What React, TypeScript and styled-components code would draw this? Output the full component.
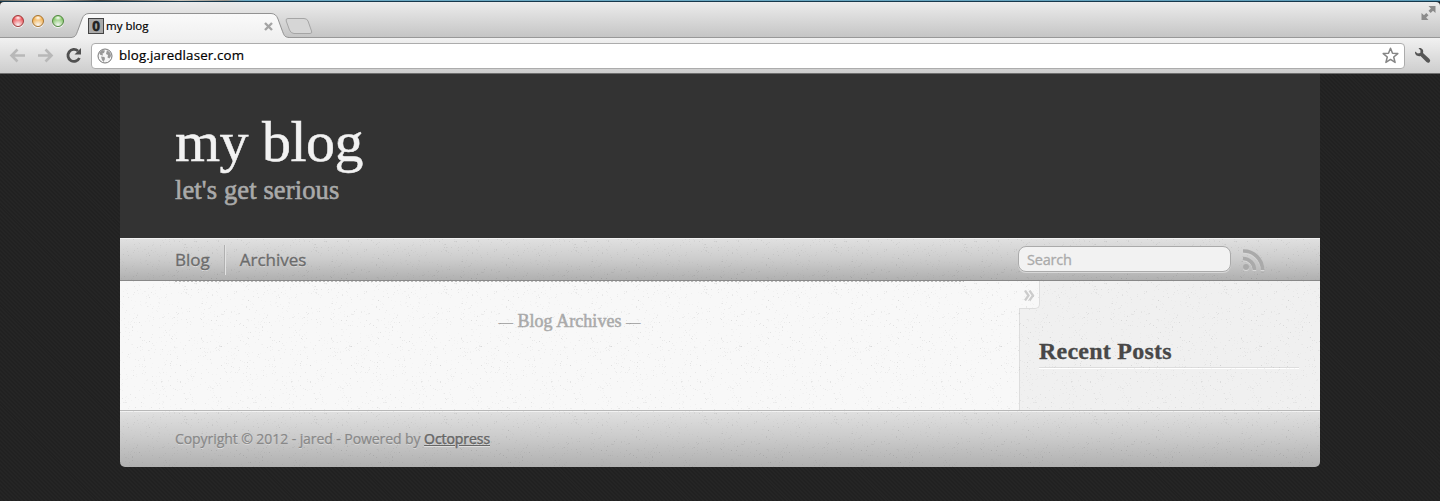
import React from "react";
import styled, { createGlobalStyle } from "styled-components";

const serif = `"Liberation Serif", "Times New Roman", serif`;
const sans = `"Open Sans", "Noto Sans", sans-serif`;

const Global = createGlobalStyle`
  *, *::before, *::after { box-sizing: border-box; }
  body { margin: 0; background: #232323; overflow: hidden; }
  h1, h2, h3, p { margin: 0; }
`;

const Screen = styled.div`
  height: 501px;
  display: flex;
  flex-direction: column;
  background: repeating-linear-gradient(45deg, #212121 0 1.4px, #252525 1.4px 2.8px);
`;

/* Browser window */
const Desktop = styled.div`
  height: 2px;
  flex: none;
  background: linear-gradient(90deg, #6b6a62 0, #b9b5aa 50px, #4c4c48 100px, #c7c3b9 180px, #99958c 225px, #6ba9c3 245px, #6ba9c3 700px, #5d9cb8 100%);
  border-bottom: 1px solid #17384c;
`;
const TabStrip = styled.div`
  height: 36px;
  flex: none;
  display: flex;
  align-items: flex-end;
  background: linear-gradient(#ececec, #c5c5c5);
  border-bottom: 1px solid #989898;
  border-radius: 4px 4px 0 0;
`;
const Lights = styled.div`
  display: flex;
  gap: 8px;
  padding: 0 0 10px 12px;
  width: 72px;
`;
const Light = styled.i<{ $c: string; $edge: string }>`
  width: 12px;
  height: 12px;
  border-radius: 50%;
  border: 1px solid ${(p) => p.$edge};
  background: radial-gradient(ellipse 4px 2.5px at 50% 18%, #fff, transparent), radial-gradient(circle at 50% 90%, #ffffffd0, ${(p) => p.$c} 75%);
  box-shadow: 0 1px 0 #f5f5f5;
`;
const Tab = styled.div`
  position: relative;
  width: 214px;
  height: 25px;
  margin-bottom: -1px;
  display: flex;
  align-items: center;
  padding: 1px 13px 0 16px;
  font: 11.5px ${sans};
  color: #000;
`;
const TabShape = styled.svg`
  position: absolute;
  left: 0;
  top: 0;
`;
const Favicon = styled.span`
  position: relative;
  width: 16px;
  height: 16px;
  margin-right: 2px;
  border: 1px solid #444;
  background: #aaa;
  color: #222;
  font: bold 13.5px/14px "Open Sans", sans-serif;
  text-align: center;
  -webkit-text-stroke: 0.5px #222;
`;
const TabName = styled.span`
  position: relative;
  flex: 1;
  padding-bottom: 2px;
  -webkit-text-stroke: 0.2px #000;
`;
const CloseIcon = styled.svg`
  position: relative;
`;
const NewTab = styled.svg`
  margin: 0 0 2px -2px;
`;
const Spacer = styled.div`
  flex: 1;
`;
const FullIcon = styled.svg`
  margin: 0 4px 17px 0;
`;
const Toolbar = styled.div`
  height: 36px;
  flex: none;
  display: flex;
  align-items: center;
  padding: 0 9px;
  background: linear-gradient(#f1f1f1, #cdcdcd);
  border-bottom: 1px solid #6e6e6e;
`;
const NavIcons = styled.svg`
  flex: none;
`;
const Address = styled.div`
  flex: 1;
  height: 26px;
  display: flex;
  align-items: center;
  padding: 0 5px;
  background: #fff;
  border: 1px solid #acacac;
  border-radius: 4px;
  font: 13.3px ${sans};
  color: #000;
`;
const Url = styled.span`
  flex: 1;
  margin-left: 6px;
  padding-bottom: 2px;
  letter-spacing: 0.16px;
  -webkit-text-stroke: 0.2px #000;
`;
const Wrench = styled.svg`
  margin-left: 9px;
`;

/* Blog page */
const Page = styled.main`
  width: 1200px;
  margin: 0 auto;
  border-radius: 0 0 5px 5px;
  overflow: hidden;
`;
const Header = styled.header`
  height: 164px;
  padding: 37px 55px 0;
  background: #333;
  font-family: ${serif};
`;
const Title = styled.h1`
  font-size: 58px;
  line-height: 62px;
  font-weight: 400;
  letter-spacing: -0.55px;
  color: #f2f2f2;
  -webkit-text-stroke: 0.5px #f2f2f2;
`;
const Subtitle = styled.h2`
  margin-top: 2px;
  font-size: 26.5px;
  line-height: 30px;
  font-weight: 400;
  letter-spacing: 0.12px;
  color: #aaa;
  -webkit-text-stroke: 0.6px #aaa;
`;
const Textured = styled.div`
  position: relative;
`;
const Grain = styled.svg`
  position: absolute;
  inset: 0;
  width: 100%;
  height: 100%;
  pointer-events: none;
`;
const Nav = styled(Textured).attrs({ as: "nav" })`
  height: 43px;
  display: flex;
  align-items: center;
  padding: 0 54px 0 55px;
  background: linear-gradient(#e0e0e0, #ccc 50%, #b0b0b0);
  border-top: 1px solid #f2f2f2;
  border-bottom: 1px solid #888;
`;
const NavLink = styled.a<{ $divided?: boolean }>`
  position: relative;
  height: 30px;
  margin-right: ${(p) => (p.$divided ? 15 : 0)}px;
  padding-right: ${(p) => (p.$divided ? 14 : 0)}px;
  border-right: ${(p) => (p.$divided ? "1px solid #b0b0b0" : "0")};
  box-shadow: ${(p) => (p.$divided ? "1px 0 0 #e3e3e3" : "none")};
  font: 17px/29px ${sans};
  color: #6b6b6b;
  text-shadow: 0 1px #dfdfdf;
  -webkit-text-stroke: 0.35px #6b6b6b;
`;
const Search = styled.div`
  position: relative;
  width: 213px;
  height: 26px;
  margin-bottom: 1px;
  padding-left: 8px;
  border: 1px solid #aaa;
  border-radius: 8px;
  background: #f2f2f2;
  box-shadow: 0 1px #d8d8d8;
  font: 14.5px/25px ${sans};
  letter-spacing: -0.2px;
  color: #aaa;
  -webkit-text-stroke: 0.3px #aaa;
`;
const Rss = styled.svg`
  position: relative;
  margin-left: 11px;
`;
const Content = styled(Textured)`
  height: 129px;
  display: flex;
  background: #f8f8f8;
`;
const Main = styled.section`
  position: relative;
  width: 899px;
  padding: 29px 0 0 55px;
`;
const DottedRule = styled.svg`
  position: absolute;
  left: 55px;
  top: 0;
`;
const Archives = styled.h3`
  width: 789px;
  text-align: center;
  font: 18px/22px ${serif};
  letter-spacing: 0.05px;
  color: #aaa;
  -webkit-text-stroke: 0.5px #aaa;
`;
const Dash = styled.span`
  font-size: 14px;
`;
const Sidebar = styled.aside`
  position: relative;
  flex: 1;
  padding: 56px 21px 0 19px;
  background: #f0f0f0;
  border-left: 1px solid #ddd;
`;
const Toggle = styled.span`
  position: absolute;
  left: -1px;
  top: 0;
  width: 21px;
  height: 28px;
  display: flex;
  align-items: center;
  justify-content: center;
  padding-top: 2px;
  background: #f8f8f8;
  border: solid #ddd;
  border-width: 0 1px 1px 0;
  border-bottom-right-radius: 5px;
`;
const SideTitle = styled.h2`
  height: 31px;
  font: bold 24px/29px ${serif};
  letter-spacing: 0.24px;
  color: #484848;
  -webkit-text-stroke: 0.3px #484848;
  border-bottom: 1px solid #ddd;
  box-shadow: 0 1px #fff;
`;
const Footer = styled(Textured).attrs({ as: "footer" })`
  height: 57px;
  padding: 18px 55px 0;
  background: linear-gradient(#e0e0e0, #ccc 45%, #b0b0b0);
  border-top: 1px solid #b8b8b8;
  box-shadow: inset 0 1px #f2f2f2;
`;
const Copyright = styled.p`
  position: relative;
  font: 14px/20px ${sans};
  letter-spacing: -0.07px;
  color: #888;
  text-shadow: 0 1px #ddd;
  -webkit-text-stroke: 0.25px;
`;
const Link = styled.a`
  color: #666;
  text-decoration: underline;
`;

/* Paper texture: a repeating tile of scattered specks */
const specks = (() => {
  let s = 41;
  const rnd = () => (s = (s * 16807) % 2147483647) / 2147483647;
  return Array.from({ length: 900 }, () => ({
    x: Math.floor(rnd() * 130),
    y: Math.floor(rnd() * 130),
    o: 0.015 + rnd() * rnd() * 0.09,
  }));
})();

const Paper = ({ id }: { id: string }) => (
  <Grain>
    <pattern id={id} width="130" height="130" patternUnits="userSpaceOnUse">
      {specks.map((p, i) => (
        <rect key={i} x={p.x} y={p.y} width="1" height="1" fill="#000" opacity={p.o} />
      ))}
    </pattern>
    <rect width="100%" height="100%" fill={`url(#${id})`} />
  </Grain>
);

const rssArcs = (
  <>
    <circle cx="4" cy="19" r="3" stroke="none" />
    <path d="M1 10.500A11.500 11.500 0 0 1 12.500 22" fill="none" strokeWidth="3.600" />
    <path d="M1 3A19 19 0 0 1 20.500 22" fill="none" strokeWidth="3.600" />
  </>
);

export default function App() {
  return (
    <Screen>
      <Global />
      <Desktop />
      <TabStrip>
        <Lights>
          <Light $c="#ee4b50" $edge="#a03a3a" />
          <Light $c="#f3ad45" $edge="#a87430" />
          <Light $c="#7cc35f" $edge="#50873f" />
        </Lights>
        <Tab>
          <TabShape width="220" height="26" viewBox="0 0 220 26">
            <defs>
              <linearGradient id="tab" x2="0" y2="1">
                <stop stopColor="#fafafa" />
                <stop offset="1" stopColor="#f0f0f0" />
              </linearGradient>
            </defs>
            <path d="M-1 24.5C4 24 4 22 6 17L10 6Q12 .5 17 .5H199Q204 .5 206 6L210 17C212 22 212 24 217 24.5V26H-1Z" fill="url(#tab)" />
            <path d="M-1 24.5C4 24 4 22 6 17L10 6Q12 .5 17 .5H199Q204 .5 206 6L210 17C212 22 212 24 217 24.5" fill="none" stroke="#929292" />
          </TabShape>
          <Favicon>0</Favicon>
          <TabName>my blog</TabName>
          <CloseIcon width="9" height="9" viewBox="0 0 9 9">
            <path d="M1 1L8 8M8 1L1 8" stroke="#a4a4a4" strokeWidth="2.400" />
          </CloseIcon>
        </Tab>
        <NewTab width="30" height="18" viewBox="0 0 30 18">
          <path d="M4 1.5H20Q23 1.5 24 4L27.5 14Q28.5 16.5 26 16.5H10Q7 16.5 5.5 13L2.2 4Q1.5 1.5 4 1.5Z" fill="#d6d6d6" stroke="#a5a5a5" />
        </NewTab>
        <Spacer />
        <FullIcon width="15" height="14" viewBox="0 0 15 14">
          <path d="M7.5 0H14.5V7L12 4.7L9.7 7L7.5 4.8L9.9 2.4ZM.5 14V7L3 9.3L5.3 7L7.5 9.2L5.1 11.6L7.5 14Z" fill="#8b8b8b" />
        </FullIcon>
      </TabStrip>
      <Toolbar>
        <NavIcons width="82" height="20" viewBox="0 0 82 20" fill="none">
          <path d="M16 9.500H3M8.500 3.500L2.500 9.500L8.500 15.500M29 9.500H42M36.500 3.500L42.500 9.500L36.500 15.500" stroke="#b8b8b8" strokeWidth="2.600" />
          <path d="M70.400 12A6 6 0 1 1 69 5" stroke="#505050" strokeWidth="2.800" />
          <path d="M72 2V8.500H65.500Z" fill="#505050" />
        </NavIcons>
        <Address>
          <svg width="16" height="16" viewBox="0 0 16 16">
            <circle cx="8" cy="8" r="7" fill="#f6f6f6" stroke="#777" />
            <path d="M2 5L5 2L8 2.500L7 5L5.500 5.500L6 7.500L3.500 7ZM4 8.500L7.500 9L8 11L6.500 14L5 12ZM10 2L13.500 5L14 8L12.500 10.500L10.500 9.500L11 7L9 6L9.500 4Z" fill="#999" />
          </svg>
          <Url>blog.jaredlaser.com</Url>
          <svg width="17" height="17" viewBox="0 0 17 17">
            <path d="M8.500 1.200L10.500 6.200L15.800 6.600L11.700 10L13.100 15.400L8.500 12.400L3.900 15.400L5.300 10L1.200 6.600L6.500 6.200Z" fill="#fff" stroke="#858585" strokeWidth="1.500" strokeLinejoin="round" />
          </svg>
        </Address>
        <Wrench width="17" height="17" viewBox="0 0 17 17">
          <path d="M4.500 1C8 .3 10 3 9 6L15.500 12Q17 14 15.500 15.300Q14 16.500 12.500 15L6.500 9C3.500 9.800 .7 8 1 4.500L3.800 6.500L6.300 6L6.500 3.500Z" fill="#555" />
        </Wrench>
      </Toolbar>
      <Page>
        <Header>
          <Title>my blog</Title>
          <Subtitle>let's get serious</Subtitle>
        </Header>
        <Nav>
          <Paper id="nav-paper" />
          <NavLink $divided>Blog</NavLink>
          <NavLink>Archives</NavLink>
          <Spacer />
          <Search>Search</Search>
          <Rss width="24" height="24" viewBox="0 0 24 24">
            <g fill="#d8d8d8" stroke="#d8d8d8" transform="translate(0 1)">{rssArcs}</g>
            <g fill="#aaa" stroke="#aaa">{rssArcs}</g>
          </Rss>
        </Nav>
        <Content>
          <Main>
            <DottedRule width="789" height="1">
              <path d="M0 .5H789" stroke="#bbb" strokeDasharray="2 2" />
            </DottedRule>
            <Archives>
              <Dash>—</Dash> Blog Archives <Dash>—</Dash>
            </Archives>
          </Main>
          <Sidebar>
            <Toggle>
              <svg width="11" height="11" viewBox="0 0 11 11">
                <path d="M1 .5L4.500 5.500L1 10.500M5.500 .5L9 5.500L5.500 10.500" fill="none" stroke="#ccc" strokeWidth="2.300" />
              </svg>
            </Toggle>
            <SideTitle>Recent Posts</SideTitle>
          </Sidebar>
          <Paper id="content-paper" />
        </Content>
        <Footer>
          <Paper id="footer-paper" />
          <Copyright>
            Copyright © 2012 - jared - Powered by <Link>Octopress</Link>
          </Copyright>
        </Footer>
      </Page>
    </Screen>
  );
}
